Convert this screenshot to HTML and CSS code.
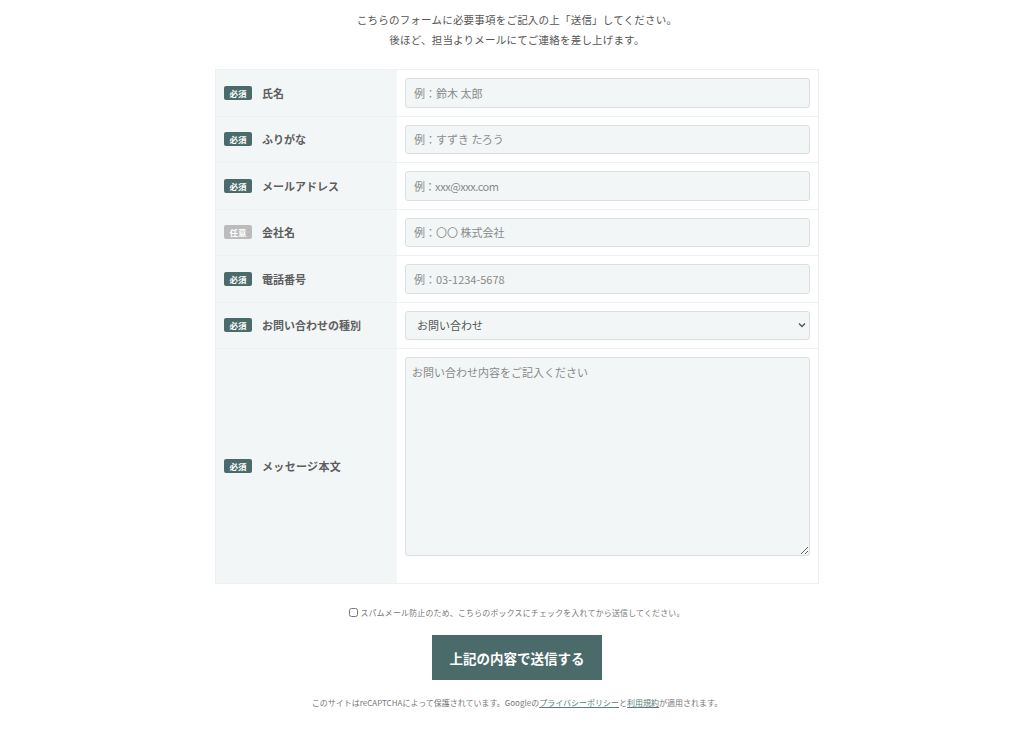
FILE: index.html
```html
<!DOCTYPE html>
<html lang="ja">
<head>
    <meta charset="UTF-8">
    <meta name="viewport" content="width=device-width, initial-scale=1.0">
    <title>お問い合わせ</title>
    <link rel="stylesheet" href="styles.css">
</head>
<body>
    <!-- Lead text -->
    <p class="lead">こちらのフォームに必要事項をご記入の上「送信」してください。<br>後ほど、担当よりメールにてご連絡を差し上げます。</p>

    <form class="contact">
        <table class="form-table">
            <tr>
                <th><span class="badge">必須</span>氏名</th>
                <td><input type="text" placeholder="例：鈴木 太郎"></td>
            </tr>
            <tr>
                <th><span class="badge">必須</span>ふりがな</th>
                <td><input type="text" placeholder="例：すずき たろう"></td>
            </tr>
            <tr>
                <th><span class="badge">必須</span>メールアドレス</th>
                <td><input type="email" class="mail" placeholder="例：xxx@xxx.com"></td>
            </tr>
            <tr>
                <th><span class="badge optional">任意</span>会社名</th>
                <td><input type="text" placeholder="例：〇〇 株式会社"></td>
            </tr>
            <tr>
                <th><span class="badge">必須</span>電話番号</th>
                <td><input type="tel" placeholder="例：03-1234-5678"></td>
            </tr>
            <tr>
                <th><span class="badge">必須</span>お問い合わせの種別</th>
                <td>
                    <select>
                        <option>お問い合わせ</option>
                        <option>資料請求</option>
                        <option>その他</option>
                    </select>
                </td>
            </tr>
            <tr>
                <th class="message-label"><span class="badge">必須</span>メッセージ本文</th>
                <td class="message-cell"><textarea placeholder="お問い合わせ内容をご記入ください"></textarea></td>
            </tr>
        </table>

        <label class="spam-check"><input type="checkbox">スパムメール防止のため、こちらのボックスにチェックを入れてから送信してください。</label>

        <button type="submit" class="submit-btn">上記の内容で送信する</button>

        <p class="recaptcha">このサイトはreCAPTCHAによって保護されています。Googleの<a href="#">プライバシーポリシー</a>と<a href="#">利用規約</a>が適用されます。</p>
    </form>
</body>
</html>
```

FILE: styles.css
```css
/* Global */
body {
    margin: 0;
    padding: 0 0 0 10px;
    font-family: "Noto Sans CJK JP", "Noto Sans", sans-serif;
    color: #555;
    background: #fff;
}

.lead {
    margin: 10px 0 19px;
    font-size: 10.5px;
    line-height: 20px;
    text-align: center;
    letter-spacing: 0.02em;
}

.contact {
    width: 604px;
    margin: 0 auto;
}

/* Table */
.form-table {
    width: 100%;
    border-collapse: collapse;
    border: 1px solid #eef0f1;
}

.form-table th,
.form-table td {
    border-top: 1px solid #eef0f1;
    padding: 8px 8px;
    vertical-align: middle;
}

.form-table th {
    width: 165px;
    background: #f3f6f7;
    text-align: left;
    font-size: 11px;
    font-weight: bold;
    color: #5e5e5e;
    white-space: nowrap;
}

.message-label {
    letter-spacing: 0.03em;
}

.badge {
    display: inline-block;
    width: 28px;
    height: 14px;
    line-height: 14px;
    margin-right: 10px;
    border-radius: 2px;
    background: #4b6b6b;
    color: #fff;
    font-size: 8.5px;
    font-weight: bold;
    letter-spacing: 0;
    text-align: center;
    vertical-align: 1px;
}

.badge.optional {
    background: #bcbcbc;
}

/* Inputs */
input[type="text"],
input[type="email"],
input[type="tel"],
select,
textarea {
    display: block;
    box-sizing: border-box;
    width: 100%;
    height: 29.5px;
    padding: 0 8px;
    border: 1px solid #dcdfe0;
    border-radius: 3px;
    background-color: #f2f6f6;
    font-family: inherit;
    font-size: 11px;
    color: #555;
}

::placeholder {
    color: #8a8a8a;
}

input.mail::placeholder {
    letter-spacing: -0.04em;
}

select {
    appearance: none;
    padding-left: 11px;
    background-image: url("data:image/svg+xml;utf8,<svg xmlns='http://www.w3.org/2000/svg' width='8' height='6' viewBox='0 0 8 6'><path d='M1 1.5l3 3 3-3' fill='none' stroke='%23555' stroke-width='1.4'/></svg>");
    background-repeat: no-repeat;
    background-position: right 3px center;
}

.message-cell {
    padding-bottom: 27px !important;
}

textarea {
    height: 199px;
    padding: 6px 6px;
    line-height: 16px;
    resize: vertical;
}

/* Bottom */
.spam-check {
    display: flex;
    align-items: center;
    justify-content: center;
    margin-top: 23px;
    font-size: 7.9px;
    color: #777;
    letter-spacing: 0.03em;
}

.spam-check input {
    width: 9px;
    height: 9px;
    margin: 0 2px 0 0;
}

.submit-btn {
    display: block;
    width: 170px;
    height: 45px;
    margin: 17px auto 0;
    border: none;
    background: #4b6b6b;
    color: #fff;
    font-family: inherit;
    font-size: 13.5px;
    font-weight: bold;
    cursor: pointer;
}

.recaptcha {
    margin: 17px 0 0;
    font-size: 8px;
    text-align: center;
    color: #777;
}

.recaptcha a {
    color: #5b7b7c;
}
```
